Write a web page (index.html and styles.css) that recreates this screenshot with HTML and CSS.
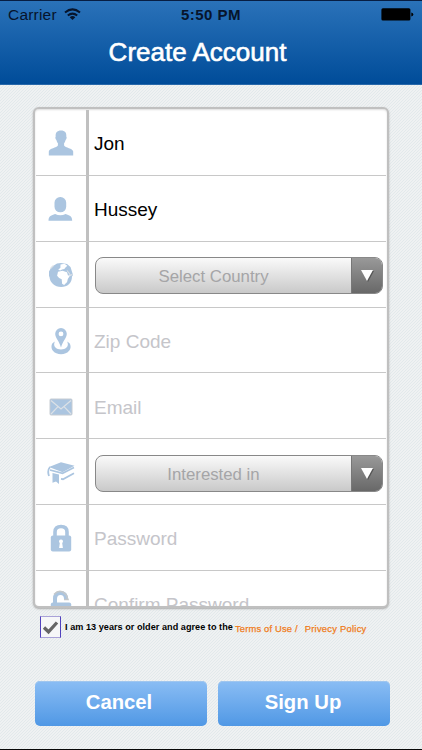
FILE: index.html
```
<!DOCTYPE html>
<html lang="en">
<head>
<meta charset="utf-8">
<title>Create Account</title>
<link rel="stylesheet" href="styles.css">
</head>
<body>
<header class="header">
  <div class="status">
    <div class="carrier"><span>Carrier</span>
      <svg width="17" height="13" viewBox="0 0 17 13" fill="none" stroke="#07142b" stroke-width="2"><path d="M1 4.6Q8.500-1.800 16 4.600M3.800 7.600Q8.500 3.600 13.200 7.600"/><path d="M5.700 9.200Q8.500 6.900 11.300 9.200L8.500 12z" fill="#07142b" stroke="none"/></svg>
    </div>
    <div class="time">5:50 PM</div>
    <svg class="battery" width="33" height="13" viewBox="0 0 33 13"><rect x=".4" y=".3" width="29" height="12.200" rx="1.500"/><path d="M30.300 4.500q2 .3 2 2t-2 2z"/></svg>
  </div>
  <h1>Create Account</h1>
</header>
<main>
  <form class="panel">
    <div class="row"><div class="icon"><svg width="26" height="26" viewBox="0 0 26 26"><path d="M13 .5c4 0 5.700 2.300 5.300 6 .8 1 .2 2.800-.7 3.400-.3 1.700-1 2.500-1.500 3.200v2.300c1 2.300 8.900 2.700 9.100 6.200V25.500H.8v-3.900c.2-3.500 8.100-3.900 9.100-6.200v-2.300C9.400 12.400 8.700 11.600 8.400 9.900 7.500 9.300 6.900 7.500 7.700 6.500 7.300 2.800 9 .5 13 .5z"/></svg></div><div class="field value">Jon</div></div>
    <div class="row"><div class="icon"><svg class="person" width="26" height="26" viewBox="0 0 26 26"><rect x="6.500" y="1" width="11.700" height="15.300" rx="5.700"/><path d="M.5 24.700c0-4.800 3-5.500 6.600-6.700q5.300 2.500 10.500 0c3.600 1.200 6.600 1.900 6.600 6.700z"/></svg></div><div class="field value">Hussey</div></div>
    <div class="row"><div class="icon"><svg width="26" height="26" viewBox="0 0 26 26"><path d="M1 9.500 3.500 5 9 1.500 13 1l6 1 3.500 3L25 13l-1 1.500C24 21 19.500 25 13.200 25 6.500 25 2 20.500 1.500 15L1 14z"/><path class="cut" d="M10 9.800l4.500-1 4.500 1.400 1 3.300 2.200-.2-2.400 3.700-.7 3-3 3-2-1.300-.4-4.400-2.600-1.300-2-2.300zM12.500 2.500l4-.7 2.800 2-1.800 1.700-1.200 1.600-2.300.5-1.700 1-2.100-.8 2.200-2z"/><path class="line" d="M19 8.500l2 2.500 1.500 2.500 2-1.300M2.500 6.500l3-3"/></svg></div><div class="field"><div class="select"><span>Select Country</span><div class="arrow"><svg width="14" height="13" viewBox="0 0 14 13"><path d="M1 1h12L7 12z"/></svg></div></div></div></div>
    <div class="row"><div class="icon"><svg width="26" height="28" viewBox="0 0 26 28"><path fill-rule="evenodd" d="M13 1a5.800 5.800 0 0 1 5.800 5.800C18.800 11 14.800 14 13 20.500 11.200 14 7.200 11 7.200 6.800A5.800 5.800 0 0 1 13 1zm0 3.500a2.400 2.400 0 1 0 0 4.800 2.400 2.400 0 0 0 0-4.800z"/><path d="M7 14.500C2.800 16 2.800 21 4.700 23.500c3.700 5 13 5 16.600 0 2-2.500 2-7.500-2.300-9 2 3 .7 8-6 8s-8-5-6-8z"/></svg></div><div class="field">Zip Code</div></div>
    <div class="row"><div class="icon"><svg width="26" height="20" viewBox="0 0 26 20"><rect x="2" y="2" width="22" height="16" rx="1" stroke="#c7ccd2"/><path d="M3 3.500 13 12l10-8.500M3 17l7-7.300M23 17l-7-7.300" class="line"/></svg></div><div class="field">Email</div></div>
    <div class="row"><div class="icon"><svg class="book" width="28" height="26" viewBox="0 0 28 26"><path d="M2 7 14 2.300 27.500 5.800 15.500 12.200z"/><path d="M3 7q-3 3.500-1 9M3 10l12.500 3.300L27 7.500M14 18.800l2 .4L27 13.300" fill="none" stroke="#abc5e0" stroke-width="1.800"/><path d="M5.500 13l6.500 1.500v9.500L9 21.500 5.500 22.700z"/></svg></div><div class="field"><div class="select interested"><span>Interested in</span><div class="arrow"><svg width="14" height="13" viewBox="0 0 14 13"><path d="M1 1h12L7 12z"/></svg></div></div></div></div>
    <div class="row"><div class="icon"><svg width="24" height="28" viewBox="0 0 24 28"><path d="M6 14V8q0-5.500 6-5.500T18 8v6" fill="none" stroke="#abc5e0" stroke-width="3.600"/><rect x="1.800" y="11.500" width="20.400" height="16" rx="2"/><path class="cut" d="M12 15.500a2 2 0 0 1 1.200 3.600l.7 5h-3.800l.7-5A2 2 0 0 1 12 15.500z"/></svg></div><div class="field">Password</div></div>
    <div class="row last"><div class="icon"><svg class="unlocked" width="24" height="28" viewBox="0 0 24 28"><path d="M6 14V9q0-6 5.500-6T17 9" fill="none" stroke="#abc5e0" stroke-width="4"/><path d="M5 4.500q6-6.500 12 0l2 5h-4" fill="none" stroke="#c4c8ca" stroke-width="1.500"/><rect x="1.800" y="12.500" width="20.400" height="15" rx="2"/></svg></div><div class="field confirm">Confirm Password</div></div>
  </form>
  <div class="agreement">
    <div class="check"><svg width="17" height="15" viewBox="0 0 17 15"><path d="m2 7.500 4.500 4.300L15 2.500" fill="none" stroke="#666" stroke-width="3.300"/></svg></div>
    <span class="consent">I am 13 years or older and agree to the</span><a class="terms">Terms of Use /</a><a class="privacy">Privecy Policy</a>
  </div>
  <div class="actions"><button type="button">Cancel</button><button type="button">Sign Up</button></div>
</main>
</body>
</html>
```
FILE: styles.css
```
* { box-sizing: border-box; }
body {
  margin: 0;
  width: 422px;
  height: 750px;
  overflow: hidden;
  font-family: "Liberation Sans", Arial, sans-serif;
  border-bottom: 1px solid #080808;
  background: linear-gradient(135deg, #eff1f2 0 33%, #e2e9eb 33% 50%, #eff1f2 50% 83%, #e2e9eb 83%) 0 0 / 3px 3px;
}
.header {
  height: 85px;
  border-top: 1px solid #071e43;
  border-bottom: 1px solid #2868aa;
  background: linear-gradient(#2a72b9, #004c99);
}
.status {
  display: grid;
  grid-template-columns: 1fr auto 1fr;
  align-items: center;
  height: 27px;
  padding: 0 8px;
  color: #07142b;
}
.carrier { display: flex; align-items: center; gap: 7px; font-size: 15.500px; letter-spacing: .2px; }
.time { font-size: 15px; font-weight: bold; letter-spacing: .45px; }
.battery { justify-self: end; fill: #000; }
h1 {
  margin: 7px 0 0;
  padding-right: 27px;
  color: #fff;
  font-size: 26px;
  line-height: 34px;
  font-weight: normal;
  text-align: center;
  -webkit-text-stroke: .6px #fff;
}
main { padding: 22px 33px 0; }
.panel {
  width: 356px;
  height: 501px;
  overflow: hidden;
  padding: 1px 1px 0;
  background: #fff;
  border: 2px solid #c0c0c0;
  border-radius: 6px;
  box-shadow: 0 1px 2px #aaa, inset 0 1px 2px #ddd;
}
.row { display: flex; height: 65.850px; }
.icon {
  display: grid;
  place-items: center;
  width: 53px;
  padding-top: 2px;
  border-right: 3px solid #c0c0c0;
  border-bottom: 1.500px solid #c8c8c8;
}
.icon svg { fill: #abc5e0; }
.icon .cut { fill: #fff; }
.icon .line { fill: none; stroke: #dce1e6; stroke-width: 1.200; }
.field {
  display: flex;
  align-items: center;
  flex: 1;
  padding: 4px 2px 0 5px;
  border-bottom: 1.500px solid #c8c8c8;
  color: #c5c5ca;
  font-size: 19px;
}
.value { color: #000; }
.select {
  display: flex;
  width: 288px;
  height: 37px;
  margin: 0 0 1px 1px;
  overflow: hidden;
  border: 1px solid #888;
  border-radius: 8px;
  background: linear-gradient(#fafafa, #c9c9c9);
  color: #a5a5a7;
  font-size: 16.800px;
  line-height: 37px;
  text-align: center;
}
.select span { flex: 1; padding-right: 20px; }
.arrow {
  display: grid;
  place-items: center;
  width: 31px;
  border-left: 1px solid #777;
  background: linear-gradient(#999, #686868);
}
.arrow svg { fill: #fff; filter: drop-shadow(1px 1px 0 #555); }
.last .icon, .last .field { height: 65.850px; }
.agreement { display: flex; height: 40px; padding: 8px 0 0 7px; white-space: nowrap; }
.check {
  display: grid;
  place-items: center;
  width: 21px;
  height: 22px;
  border: 1px solid #a9a2d8;
  border-left-color: #5142bd;
  border-right-color: #5142bd;
  background: #f6f7f8;
}
.consent { margin-left: 4px; width: 170px; padding-top: 5px; font-size: 9.100px; font-weight: bold; line-height: 12px; letter-spacing: .04px; }
.terms, .privacy { color: #ef7c1b; font-size: 9.400px; line-height: 12px; padding-top: 7px; -webkit-text-stroke: .25px #ef7c1b; letter-spacing: .16px; }
.privacy { margin-left: 7px; letter-spacing: .25px; }
.actions { display: grid; grid-template-columns: 172px 172px; gap: 11px; margin: 33px 0 0 2px; }
button {
  height: 45px;
  padding: 0 4px 2px 0;
  border: 0;
  border-radius: 5px;
  background: linear-gradient(#8abdf4, #5098e5);
  box-shadow: inset 0 1px #a0c6ee;
  color: #fff;
  font: bold 20.300px "Liberation Sans", Arial, sans-serif;
}
button + button { padding-right: 2px; }
```
